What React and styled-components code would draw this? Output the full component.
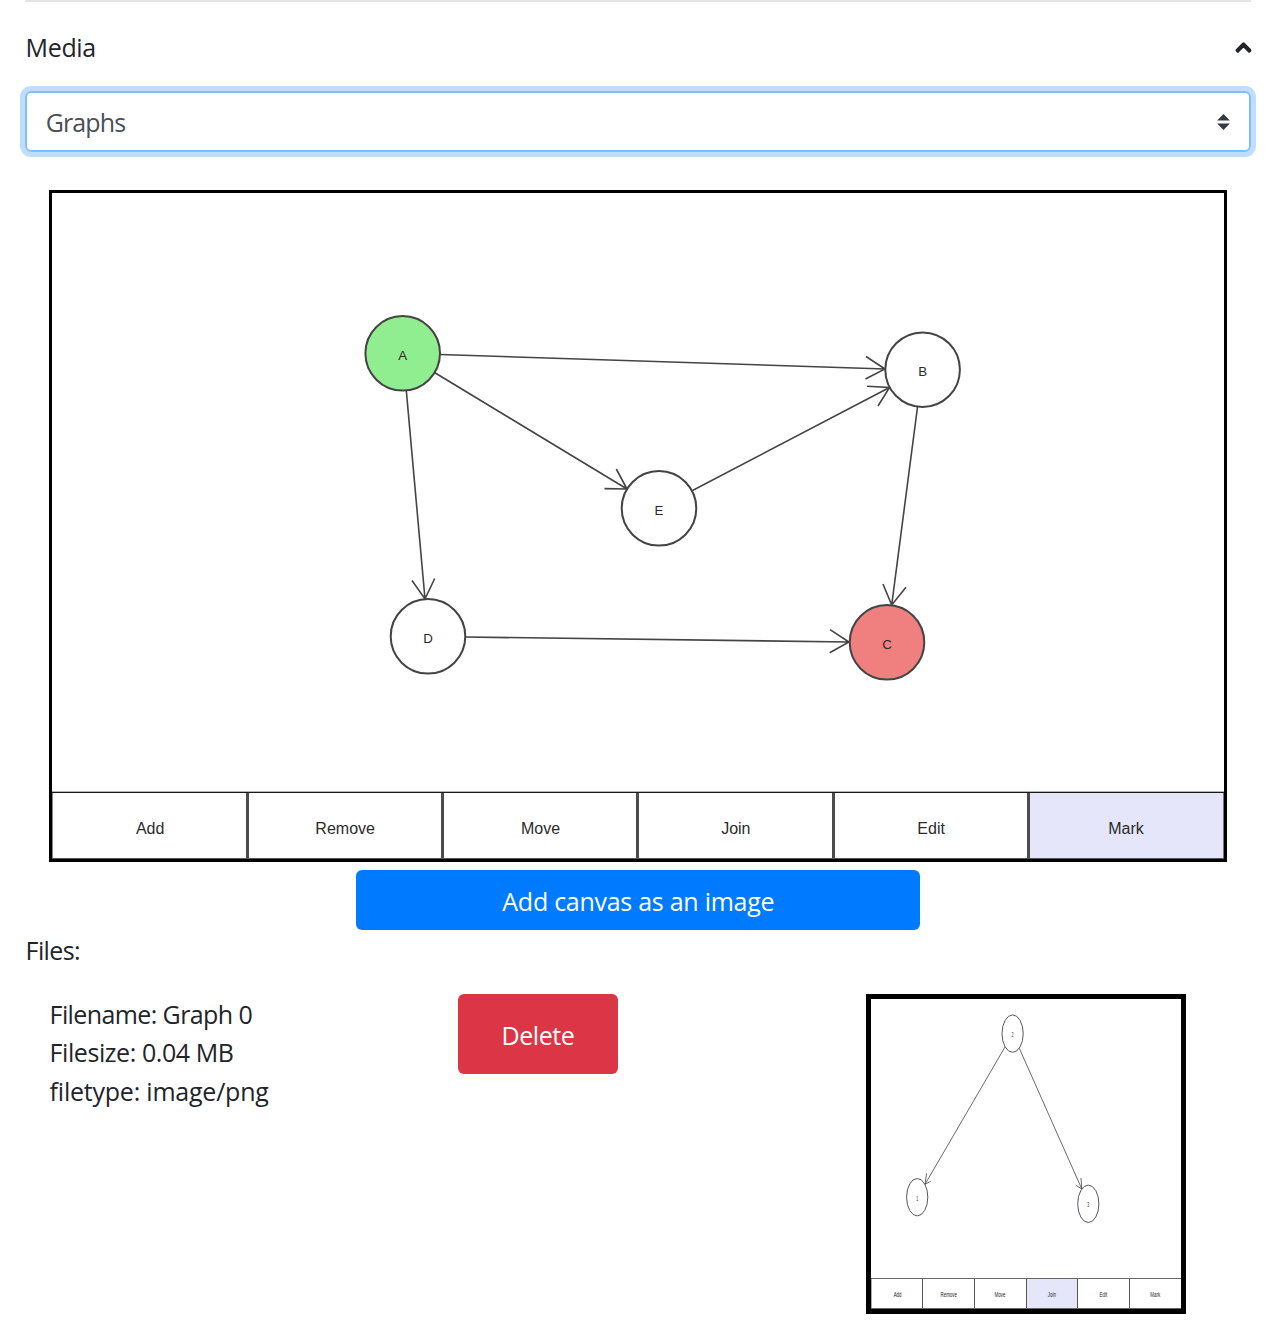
import React from "react";
import styled, { createGlobalStyle } from "styled-components";
import { FaChevronUp } from "react-icons/fa";

const GlobalStyle = createGlobalStyle`
  *, *::before, *::after { box-sizing: border-box; }
  body {
    margin: 0;
    background: #fff;
    color: #212529;
    font-family: "Segoe UI", "Open Sans", "Noto Sans", sans-serif;
    font-size: 25px;
    line-height: 38.4px;
  }
`;

const Page = styled.main`
  width: 1275px;
  height: 1339px;
  padding: 0 24px 0 25px;
  overflow: hidden;
`;

const Divider = styled.hr`
  height: 2px;
  margin: 0;
  border: 0;
  background: #e5e5e5;
`;

const Text = styled.span`
  padding-left: 0.6px;
  letter-spacing: ${(p) => p.$track || 0}px;
  white-space: nowrap;
`;

const SectionHeader = styled.header`
  display: flex;
  align-items: center;
  justify-content: space-between;
  height: 38px;
  margin: 26px -1px 25px 0;
`;

const Chevron = styled(FaChevronUp)`
  width: 17px;
  height: 17px;
  overflow: visible;
  stroke: currentColor;
  stroke-width: 44px;
`;

const Select = styled.div`
  display: flex;
  align-items: center;
  justify-content: space-between;
  height: 61px;
  padding: 1px 19px 0 18.2px;
  border: 2px solid #80bdff;
  border-radius: 6px;
  box-shadow: 0 0 0 5px #bfdeff;
  color: #495057;
`;

const Caret = styled.svg`
  width: 13px;
  height: 16px;
  fill: #343a40;
`;

const Canvas = styled.section`
  display: flex;
  flex-direction: column;
  width: 1178px;
  height: 672px;
  margin: 38px 0 8px 24px;
  border: 3px solid #000;
`;

const Drawing = styled.svg`
  display: block;
  flex: 1;
  min-height: 0;
  width: 100%;
  fill: none;
  stroke: #444;
  stroke-width: ${(p) => p.$line}px;

  text {
    fill: #2b2b2b;
    stroke: none;
    font-family: Arial, "Liberation Sans", sans-serif;
    text-anchor: middle;
  }
`;

const Toolbar = styled.div`
  display: grid;
  grid-template-columns: repeat(6, 1fr);
  height: 67px;
  border-top: 1px solid #1a1a1a;
  border-bottom: 1px solid #555;
  box-shadow: 0 -1px #b4b4b4, inset -1px 0 #777;
`;

const Tool = styled.div`
  display: flex;
  align-items: center;
  justify-content: center;
  margin: 0 ${(p) => (p.$last ? 1 : 0)}px 0 ${(p) => (p.$first ? 0 : -1.7)}px;
  padding: 6px ${(p) => (p.$first ? 0 : 1)}px 0 0;
  border-left: ${(p) => (p.$first ? "1px solid #888" : "3px solid #4c4c4c")};
  background: ${(p) => (p.$active ? "#e6e6fa" : "#fff")};
  color: #2b2b2b;
  font: 16px/20px Arial, "Liberation Sans", sans-serif;
`;

const Button = styled.button`
  display: flex;
  align-items: center;
  justify-content: center;
  width: ${(p) => p.$width}px;
  height: ${(p) => p.$height}px;
  padding: 2px 0 0;
  border: 0;
  border-radius: 6px;
  background: ${(p) => p.$color};
  color: #fff;
  font: inherit;
`;

const ActionRow = styled.div`
  display: flex;
  justify-content: center;
`;

const FilesTitle = styled.div`
  height: 64px;
  padding-top: 1px;
`;

const FileRow = styled.div`
  display: grid;
  grid-template-columns: repeat(3, 1fr);
`;

const Cell = styled.div`
  padding-left: 24px;
`;

const FileInfo = styled.div`
  display: flex;
  flex-direction: column;
  padding-top: 1px;
`;

const Thumbnail = styled.div`
  display: flex;
  flex-direction: column;
  width: 320px;
  height: 320px;
  border: 5px solid #000;
`;

const MiniToolbar = styled.div`
  display: grid;
  grid-template-columns: repeat(6, 1fr);
  height: 31px;
  border: solid #666;
  border-width: 1px 0;
`;

const MiniTool = styled.div`
  display: flex;
  align-items: center;
  justify-content: center;
  margin-left: ${(p) => (p.$first ? 0 : -0.7)}px;
  padding: 2px 1px 0 0;
  overflow: hidden;
  border-left: 1px solid ${(p) => (p.$first ? "#aaa" : "#555")};
  background: ${(p) => (p.$active ? "#e6e6fa" : "#fff")};
  color: #222;
  font: 7.4px/10px Arial, "Liberation Sans", sans-serif;

  span { transform: scaleX(0.6); }
`;

const tools = ["Add", "Remove", "Move", "Join", "Edit", "Mark"];

const nodes = [
  { id: "A", x: 402.7, y: 353.3, fill: "#90ee90" },
  { id: "B", x: 922.6, y: 369.7, fill: "#fff" },
  { id: "C", x: 887, y: 642.3, fill: "#f08080" },
  { id: "D", x: 428, y: 636.3, fill: "#fff" },
  { id: "E", x: 659, y: 508.3, fill: "#fff" },
];

const edges = [
  "M440 354.5L885 369M866 356.5L885 369L865.5 379",
  "M434.5 372.5L627 489M616.3 469L627 489L604.5 488.6",
  "M406.3 390.5L425 599M412 580.5L425 599L434.7 578.5",
  "M692.5 490.5L889.5 387.5M867 386.3L889.5 387.5L878 406",
  "M917.5 407L891.7 605M883 584L891.7 605L906 587.3",
  "M465.5 637L849 642M830 629.7L849 642L829.7 652.7",
];

const miniNodes = [
  { id: "1", x: 917.2, y: 1197.2 },
  { id: "2", x: 1012.6, y: 1033.6 },
  { id: "3", x: 1088.3, y: 1203.8 },
];

const miniEdges = [
  "M1005 1047L925 1184.3M926.6 1173.3L925 1184.3L930.8 1181.3",
  "M1019.3 1048.3L1081.8 1189M1075.8 1185.3L1081.8 1189L1081 1178",
];

export default function App() {
  return (
    <Page>
      <GlobalStyle />
      <Divider />
      <SectionHeader>
        <Text $track={-0.35}>Media</Text>
        <Chevron />
      </SectionHeader>
      <Select>
        <Text $track={-0.9}>Graphs</Text>
        <Caret viewBox="0 0 4 5">
          <path d="M2 0L0 2h4zm0 5L0 3h4z" />
        </Caret>
      </Select>
      <Canvas>
        <Drawing viewBox="52 193 1172 599" $line={1.6}>
          {edges.map((d) => <path key={d} d={d} />)}
          {nodes.map((n) => (
            <g key={n.id}>
              <circle cx={n.x} cy={n.y} r="37.3" fill={n.fill} strokeWidth="2" />
              <text x={n.x} y={n.y + 6.6} fontSize="13.3">{n.id}</text>
            </g>
          ))}
        </Drawing>
        <Toolbar>
          {tools.map((t, i) => (
            <Tool key={t} $first={i === 0} $last={i === 5} $active={t === "Mark"}>{t}</Tool>
          ))}
        </Toolbar>
      </Canvas>
      <ActionRow>
        <Button $width={564} $height={60} $color="#007bff">
          <Text $track={-0.27}>Add canvas as an image</Text>
        </Button>
      </ActionRow>
      <FilesTitle><Text $track={-0.6}>Files:</Text></FilesTitle>
      <FileRow>
        <Cell>
          <FileInfo>
            <Text $track={-0.6}>Filename: Graph 0</Text>
            <Text $track={-0.43}>Filesize: 0.04 MB</Text>
            <Text $track={-0.22}>filetype: image/png</Text>
          </FileInfo>
        </Cell>
        <Cell>
          <Button $width={160} $height={80} $color="#dc3545">
            <Text $track={-0.4}>Delete</Text>
          </Button>
        </Cell>
        <Cell>
          <Thumbnail>
            <Drawing viewBox="871 999 310 279" $line={0.8}>
              {miniEdges.map((d) => <path key={d} d={d} />)}
              {miniNodes.map((n) => (
                <g key={n.id}>
                  <ellipse cx={n.x} cy={n.y} rx="10.6" ry="18.7" fill="#fff" strokeWidth="0.9" />
                  <text transform={`translate(${n.x} ${n.y + 3.3}) scale(.57 1)`} fontSize="6.3">{n.id}</text>
                </g>
              ))}
            </Drawing>
            <MiniToolbar>
              {tools.map((t, i) => (
                <MiniTool key={t} $first={i === 0} $active={t === "Join"}>
                  <span>{t}</span>
                </MiniTool>
              ))}
            </MiniToolbar>
          </Thumbnail>
        </Cell>
      </FileRow>
    </Page>
  );
}
